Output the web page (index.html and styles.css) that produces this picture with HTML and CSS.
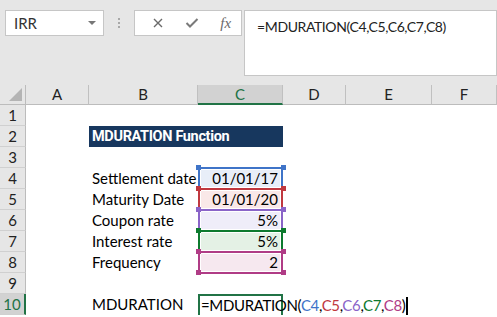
FILE: index.html
```html
<!DOCTYPE html>
<html>

<head>
    <meta charset="UTF-8">
    <title>MDURATION</title>
    <link rel="stylesheet" href="styles.css">
</head>

<body>
    <div class="toolbar">
        <div class="namebox">
            <span>IRR</span>
            <span class="caret"></span>
        </div>
        <div class="grip"><i></i><i></i><i></i></div>
        <div class="fxbox">
            <svg class="ico" width="12" height="12" viewBox="0 0 12 12">
                <path d="M2 2 L10 10 M10 2 L2 10" stroke="#6a6a6a" stroke-width="1.4" fill="none"/>
            </svg>
            <svg class="ico" width="14" height="12" viewBox="0 0 14 12">
                <path d="M1.5 6 L5 9.5 L12.5 2" stroke="#7a7a7a" stroke-width="2" fill="none"/>
            </svg>
            <span class="fx">fx</span>
        </div>
        <div class="formula">=MDURATION(C4,C5,C6,C7,C8)</div>
    </div>

    <div class="sheet">
        <div class="corner"></div>
        <div class="colhead">A</div>
        <div class="colhead">B</div>
        <div class="colhead active">C</div>
        <div class="colhead">D</div>
        <div class="colhead">E</div>
        <div class="colhead">F</div>

        <div class="rowhead">1</div>
        <div class="cell"></div><div class="cell"></div><div class="cell"></div><div class="cell"></div><div class="cell"></div><div class="cell"></div>

        <div class="rowhead">2</div>
        <div class="cell"></div>
        <div class="cell title">MDURATION Function</div>
        <div class="cell"></div><div class="cell"></div><div class="cell"></div>

        <div class="rowhead">3</div>
        <div class="cell"></div><div class="cell"></div><div class="cell"></div><div class="cell"></div><div class="cell"></div><div class="cell"></div>

        <div class="rowhead">4</div>
        <div class="cell"></div>
        <div class="cell">Settlement date</div>
        <div class="cell ref blue">01/01/17<span class="hl"></span></div>
        <div class="cell"></div><div class="cell"></div><div class="cell"></div>

        <div class="rowhead">5</div>
        <div class="cell"></div>
        <div class="cell">Maturity Date</div>
        <div class="cell ref red">01/01/20<span class="hl"></span></div>
        <div class="cell"></div><div class="cell"></div><div class="cell"></div>

        <div class="rowhead">6</div>
        <div class="cell"></div>
        <div class="cell">Coupon rate</div>
        <div class="cell ref purple">5%<span class="hl"></span></div>
        <div class="cell"></div><div class="cell"></div><div class="cell"></div>

        <div class="rowhead">7</div>
        <div class="cell"></div>
        <div class="cell">Interest rate</div>
        <div class="cell ref green">5%<span class="hl"></span></div>
        <div class="cell"></div><div class="cell"></div><div class="cell"></div>

        <div class="rowhead">8</div>
        <div class="cell"></div>
        <div class="cell">Frequency</div>
        <div class="cell ref pink">2<span class="hl"></span></div>
        <div class="cell"></div><div class="cell"></div><div class="cell"></div>

        <div class="rowhead">9</div>
        <div class="cell"></div><div class="cell"></div><div class="cell"></div><div class="cell"></div><div class="cell"></div><div class="cell"></div>

        <div class="rowhead active">10</div>
        <div class="cell"></div>
        <div class="cell">MDURATION</div>
        <div class="cell editing">
            <span class="entry">=MDURATION(<b class="c-blue">C4</b>,<b class="c-red">C5</b>,<b class="c-purple">C6</b>,<b class="c-green">C7</b>,<b class="c-pink">C8</b>)<i class="cursor"></i></span>
        </div>
        <div class="cell"></div><div class="cell"></div><div class="cell"></div>
    </div>
</body>

</html>
```

FILE: styles.css
```css
* {
    box-sizing: border-box;
    margin: 0;
    padding: 0;
}

body {
    width: 497px;
    height: 317px;
    overflow: hidden;
    background-color: #fff;
    color: #000;
    font-family: Lato, "Open Sans", sans-serif;
    font-size: 15px;
}

/* formula bar */

.toolbar {
    height: 85px;
    background-color: #e6e6e6;
    display: flex;
    align-items: flex-start;
    padding: 10px 0 0 5px;
}

.namebox {
    width: 102px;
    height: 26px;
    background-color: #fff;
    border: 1px solid #c6c6c6;
    display: flex;
    align-items: center;
    justify-content: space-between;
    padding: 0 7px 0 8px;
    color: #333;
}

.caret {
    width: 0;
    height: 0;
    border-left: 4px solid transparent;
    border-right: 4px solid transparent;
    border-top: 4px solid #777;
}

.grip {
    width: 30px;
    height: 26px;
    display: flex;
    flex-direction: column;
    align-items: center;
    justify-content: center;
    gap: 2px;
}

.grip i {
    width: 2px;
    height: 2px;
    background-color: #a8a8a8;
}

.fxbox {
    width: 111px;
    height: 26px;
    background-color: #fff;
    border: 1px solid #c6c6c6;
    display: flex;
    align-items: center;
    justify-content: space-between;
    padding: 0 10px 0 17px;
}

.fx {
    font-family: "Liberation Serif", serif;
    font-style: italic;
    font-size: 15px;
    color: #6a6a6a;
}

.formula {
    width: 260px;
    height: 66px;
    margin-left: 2px;
    background-color: #fff;
    border: 1px solid #c6c6c6;
    padding: 7px 11px 7px 12px;
    font-size: 14px;
    letter-spacing: -0.4px;
    color: #222;
    white-space: nowrap;
}

/* grid */

.sheet {
    display: grid;
    grid-template-columns: 26px 63px 109px 85px 63px 86px 65px;
    grid-template-rows: 20px repeat(10, 21px);
}

.corner {
    background-color: #e6e6e6;
    border-right: 1px solid #bcbcbc;
    border-bottom: 1px solid #bcbcbc;
    position: relative;
}

.corner::after {
    content: "";
    position: absolute;
    right: 3px;
    bottom: 3px;
    width: 0;
    height: 0;
    border-left: 13px solid transparent;
    border-bottom: 13px solid #b4b4b4;
}

.colhead {
    background-color: #e6e6e6;
    border-right: 1px solid #c0c0c0;
    border-bottom: 1px solid #bcbcbc;
    text-align: center;
    line-height: 19px;
    color: #222;
}

.colhead.active {
    background-color: #d2d2d2;
    color: #217346;
    border-bottom: 2px solid #217346;
}

.rowhead {
    background-color: #e6e6e6;
    border-right: 1px solid #bcbcbc;
    border-bottom: 1px solid #d0d0d0;
    text-align: center;
    line-height: 21px;
    color: #222;
}

.rowhead.active {
    background-color: #d2d2d2;
    color: #217346;
    border-right: 2px solid #217346;
}

.cell {
    padding: 0 3px;
    line-height: 21px;
    white-space: nowrap;
}

.title {
    grid-column: span 2;
    background-color: #17375e;
    color: #fff;
    font-family: Roboto, "Liberation Sans", sans-serif;
    font-weight: bold;
    font-size: 14.5px;
    letter-spacing: -0.35px;
}

/* referenced ranges */

.ref {
    position: relative;
    text-align: right;
    padding-right: 5px;
}

.hl {
    position: absolute;
    left: 0;
    right: 0;
    top: -1px;
    bottom: -1px;
    border: 2px solid;
    box-shadow: inset 0 0 0 1px #fff;
}

.hl::before {
    content: "";
    position: absolute;
    left: -4px;
    top: -4px;
    width: 5px;
    height: 5px;
    background-color: currentColor;
    box-shadow: 85px 0 0 currentColor, 0 21px 0 currentColor, 85px 21px 0 currentColor;
}

.blue { background-color: #e8eef8; }
.blue .hl { color: #3f74c8; }
.red { background-color: #f9e8e8; }
.red .hl { color: #c0383f; }
.purple { background-color: #efedf9; }
.purple .hl { color: #8a64c8; }
.green { background-color: #e4f1e5; }
.green .hl { color: #0d7a2e; }
.pink { background-color: #f6e8ef; }
.pink .hl { color: #b03c86; }

/* active cell */

.editing {
    position: relative;
    border: 2px solid #217346;
    border-bottom: none;
    padding-left: 1px;
    line-height: 19px;
}

.entry {
    position: relative;
    z-index: 2;
    color: #000;
    letter-spacing: -0.35px;
}

.entry b {
    font-weight: normal;
}

.c-blue { color: #3f74c8; }
.c-red { color: #c0383f; }
.c-purple { color: #8a64c8; }
.c-green { color: #0d7a2e; }
.c-pink { color: #b03c86; }

.cursor {
    display: inline-block;
    width: 2px;
    height: 18px;
    margin-left: 1px;
    vertical-align: -4px;
    background-color: #000;
}
```
